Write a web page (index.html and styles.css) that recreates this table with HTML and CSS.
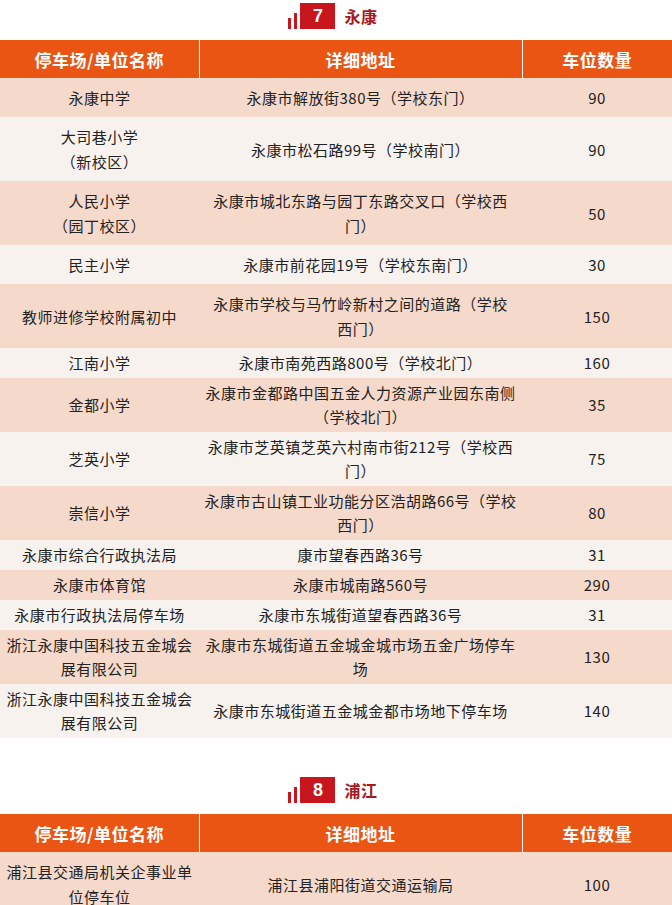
FILE: index.html
```html
<!DOCTYPE html>
<html lang="zh-CN">
<head>
<meta charset="utf-8">
<title>停车场</title>
<link rel="stylesheet" href="styles.css">
</head>
<body>
<section class="sec sec-first">
  <div class="sec-title">
    <span class="bar bar1"></span>
    <span class="bar bar2"></span>
    <span class="num">7</span>
    <span class="name">永康</span>
  </div>
  <table class="tbl">
    <colgroup><col class="c1"><col class="c2"><col class="c3"></colgroup>
    <thead>
      <tr><th>停车场/单位名称</th><th>详细地址</th><th class="last">车位数量</th></tr>
    </thead>
    <tbody class="loose">
      <tr><td>永康中学</td><td>永康市解放街380号（学校东门）</td><td>90</td></tr>
      <tr><td>大司巷小学<br>（新校区）</td><td>永康市松石路99号（学校南门）</td><td>90</td></tr>
      <tr><td>人民小学<br>（园丁校区）</td><td>永康市城北东路与园丁东路交叉口（学校西<br>门）</td><td>50</td></tr>
      <tr><td>民主小学</td><td>永康市前花园19号（学校东南门）</td><td>30</td></tr>
      <tr><td>教师进修学校附属初中</td><td>永康市学校与马竹岭新村之间的道路（学校<br>西门）</td><td>150</td></tr>
    </tbody>
    <tbody class="compact">
      <tr><td>江南小学</td><td>永康市南苑西路800号（学校北门）</td><td>160</td></tr>
      <tr><td>金都小学</td><td>永康市金都路中国五金人力资源产业园东南侧<br>（学校北门）</td><td>35</td></tr>
      <tr><td>芝英小学</td><td>永康市芝英镇芝英六村南市街212号（学校西<br>门）</td><td>75</td></tr>
      <tr><td>崇信小学</td><td>永康市古山镇工业功能分区浩胡路66号（学校<br>西门）</td><td>80</td></tr>
      <tr><td>永康市综合行政执法局</td><td>康市望春西路36号</td><td>31</td></tr>
      <tr><td>永康市体育馆</td><td>永康市城南路560号</td><td>290</td></tr>
      <tr><td>永康市行政执法局停车场</td><td>永康市东城街道望春西路36号</td><td>31</td></tr>
      <tr><td>浙江永康中国科技五金城会<br>展有限公司</td><td>永康市东城街道五金城金城市场五金广场停车<br>场</td><td>130</td></tr>
      <tr><td>浙江永康中国科技五金城会<br>展有限公司</td><td>永康市东城街道五金城金都市场地下停车场</td><td>140</td></tr>
    </tbody>
  </table>
</section>

<section class="sec">
  <div class="sec-title">
    <span class="bar bar1"></span>
    <span class="bar bar2"></span>
    <span class="num">8</span>
    <span class="name">浦江</span>
  </div>
  <table class="tbl">
    <colgroup><col class="c1"><col class="c2"><col class="c3"></colgroup>
    <thead>
      <tr><th>停车场/单位名称</th><th>详细地址</th><th class="last">车位数量</th></tr>
    </thead>
    <tbody class="loose">
      <tr><td>浦江县交通局机关企事业单<br>位停车位</td><td>浦江县浦阳街道交通运输局</td><td>100</td></tr>
    </tbody>
  </table>
</section>
</body>
</html>
```

FILE: styles.css
```css
html, body {
  margin: 0;
  padding: 0;
  background: #ffffff;
}

body {
  width: 672px;
  font-family: "Noto Sans CJK SC", "Noto Sans", sans-serif;
  color: #222222;
}

.sec {
  margin-top: 36px;
}

.sec-first {
  margin-top: 0;
}

.sec-title {
  display: flex;
  align-items: flex-end;
  justify-content: center;
  padding-top: 3px;
  height: 26px;
  margin-bottom: 11px;
  padding-right: 6px;
}

.bar {
  display: block;
  width: 3px;
  background: #c8161e;
  margin-right: 3px;
}

.bar1 {
  height: 11px;
}

.bar2 {
  height: 16px;
}

.num {
  display: flex;
  align-items: center;
  justify-content: center;
  width: 35px;
  height: 26px;
  background: #c8161e;
  color: #ffffff;
  font-family: "Liberation Sans", "Noto Sans", sans-serif;
  font-weight: bold;
  font-size: 18px;
}

.name {
  align-self: center;
  margin-left: 9px;
  font-size: 16px;
  font-weight: bold;
  letter-spacing: 0.5px;
  color: #a8181c;
  line-height: 26px;
}

.tbl {
  width: 672px;
  table-layout: fixed;
  border-collapse: collapse;
  border-spacing: 0;
}

.c1 { width: 199px; }
.c2 { width: 323px; }
.c3 { width: 150px; }

.tbl th {
  height: 38px;
  padding: 0;
  background: #ea5514;
  color: #ffffff;
  font-size: 17px;
  font-weight: bold;
  letter-spacing: 0.5px;
  text-align: center;
  vertical-align: middle;
  border-right: 1px solid #ffffff;
}

.tbl th.last {
  border-right: none;
}

.tbl td {
  padding: 0 2px;
  font-size: 15px;
  letter-spacing: 0.5px;
  text-align: center;
  vertical-align: middle;
  white-space: nowrap;
  overflow: visible;
}

.tbl tbody tr:nth-child(odd) td {
  background: #f5d9cb;
}

.tbl tbody tr:nth-child(even) td {
  background: #f8f2ef;
}

.tbl tbody.compact tr:nth-child(odd) td {
  background: #f8f2ef;
}

.tbl tbody.compact tr:nth-child(even) td {
  background: #f5d9cb;
}

.loose td {
  line-height: 25px;
  padding-top: 7px;
  padding-bottom: 7px;
}

.compact td {
  line-height: 24px;
  padding-top: 3px;
  padding-bottom: 3px;
}
```
